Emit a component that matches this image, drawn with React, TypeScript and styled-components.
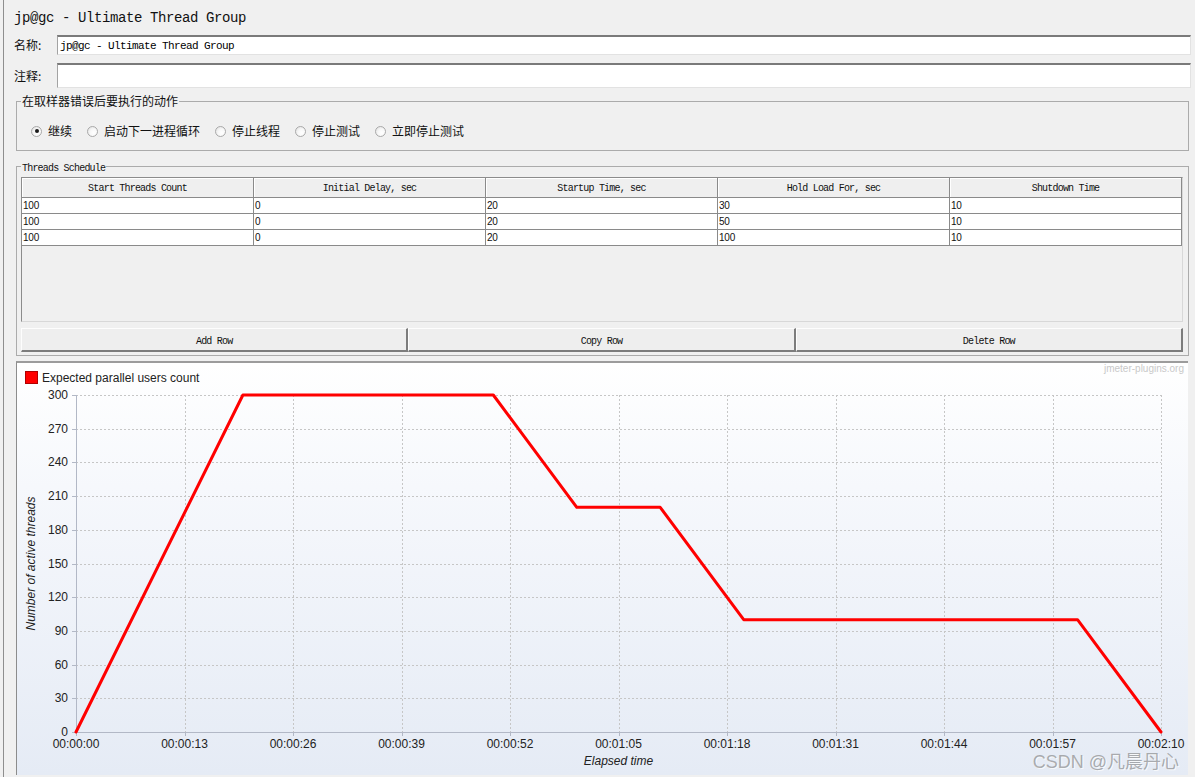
import React from "react";
import styled, { createGlobalStyle } from "styled-components";

const GlobalStyle = createGlobalStyle`
  html, body { margin: 0; padding: 0; background: #f0f0f0; }
  body {
    width: 1195px; height: 777px; overflow: hidden;
    font-family: "Liberation Sans", Arial, sans-serif;
  }
  #root { width: 1195px; height: 777px; }
`;

const MONO = `"Liberation Mono", "Noto Sans CJK SC", monospace`;
const CJK = `"Noto Sans CJK SC", "Liberation Sans", sans-serif`;
const SANS = `"Liberation Sans", Arial, sans-serif`;

const Frame = styled.div`
  box-sizing: border-box;
  margin-left: 3px;
  width: 1192px;
  height: 777px;
  border-left: 1px solid #8e8e8e;
  display: flex;
  flex-direction: column;
  overflow: hidden;
`;

const Title = styled.div`
  padding: 9px 0 0 10px;
  height: 18px;
  line-height: 19px;
  font-family: ${MONO};
  font-size: 14px;
  letter-spacing: -0.4px;
  color: #111;
  white-space: nowrap;
`;

const FieldRow = styled.div<{ $top: number; $h: number }>`
  display: flex;
  align-items: center;
  margin-top: ${(p) => p.$top}px;
  height: ${(p) => p.$h}px;
  padding-right: 4px;
`;

const FieldLabel = styled.span`
  flex: none;
  width: 43px;
  padding-left: 10px;
  font-family: ${CJK};
  font-size: 12px;
  line-height: 14px;
  color: #111;
`;

const TextField = styled.input`
  flex: 1;
  align-self: stretch;
  min-width: 0;
  box-sizing: border-box;
  margin: 0;
  background: #fff;
  border-style: solid;
  border-width: 2px 1px 1px 1px;
  border-color: #7a7a7a #e2e2e2 #e2e2e2 #a3a3a3;
  padding: 0 0 0 2px;
  outline: none;
  font-family: ${MONO};
  font-size: 11px;
  letter-spacing: -0.6px;
  color: #000;
`;

const GroupBox = styled.fieldset<{ $top: number; $pt: number; $pb: number }>`
  margin: ${(p) => p.$top}px 6px 0 12px;
  padding: ${(p) => p.$pt}px 5px ${(p) => p.$pb}px 4px;
  border: 1px solid #ababab;
  min-width: 0;
`;

const Legend = styled.legend<{ $mono?: boolean }>`
  padding: 0 1px;
  height: 14px;
  font-family: ${(p) => (p.$mono ? MONO : CJK)};
  font-size: ${(p) => (p.$mono ? "10px" : "12px")};
  letter-spacing: ${(p) => (p.$mono ? "-0.8px" : "0")};
  line-height: ${(p) => (p.$mono ? "19px" : "14px")};
  color: #111;
`;

const RadioRow = styled.div`
  display: flex;
  align-items: center;
  gap: 15px;
  height: 16px;
  padding-left: 10px;
`;

const RadioItem = styled.label`
  display: flex;
  align-items: center;
  gap: 6px;
  font-family: ${CJK};
  font-size: 12px;
  line-height: 14px;
  color: #111;
`;

const RadioDot = styled.span<{ $checked?: boolean }>`
  width: 11px;
  height: 11px;
  box-sizing: border-box;
  border-radius: 50%;
  border: 1px solid #a9a9a9;
  background: radial-gradient(circle at 65% 65%, #ffffff 0%, #f7f7f7 45%, #dcdcdc 100%);
  display: grid;
  place-items: center;
  &::after {
    content: "";
    width: 4px;
    height: 4px;
    border-radius: 50%;
    background: ${(p) => (p.$checked ? "#1a1a1a" : "transparent")};
  }
`;

const TablePane = styled.div`
  height: 145px;
  box-sizing: border-box;
  border: 1px solid #8c8c8c;
  border-bottom-color: #d8d8d8;
  border-right-color: #d8d8d8;
  background: #f0f0f0;
`;

const Grid = styled.div`
  display: grid;
  grid-template-columns: repeat(5, 1fr);
`;

const HeaderCell = styled.div`
  height: 20px;
  box-sizing: border-box;
  background: #efefef;
  border-right: 1px solid #8a8a8a;
  border-bottom: 1px solid #8a8a8a;
  box-shadow: inset 1px 1px 0 #ffffff;
  text-align: center;
  font-family: ${MONO};
  font-size: 10px;
  letter-spacing: -0.8px;
  line-height: 21px;
  color: #111;
  white-space: nowrap;
  overflow: hidden;
`;

const Cell = styled.div`
  height: 16px;
  box-sizing: border-box;
  background: #fff;
  border-right: 1px solid #8a8a8a;
  border-bottom: 1px solid #8a8a8a;
  padding-left: 1px;
  font-family: ${SANS};
  font-size: 10px;
  letter-spacing: -0.2px;
  line-height: 16px;
  color: #111;
`;

const ButtonRow = styled.div`
  display: grid;
  grid-template-columns: repeat(3, 1fr);
  margin-top: 6px;
  height: 24px;
`;

const Button = styled.button`
  box-sizing: border-box;
  height: 24px;
  margin: 0;
  padding: 3px 0 0;
  background: #eeeeee;
  border-style: solid;
  border-width: 1px 2px 2px 1px;
  border-color: #fdfdfd #7c7c7c #7c7c7c #fdfdfd;
  font-family: ${MONO};
  font-size: 10px;
  letter-spacing: -0.8px;
  color: #111;
`;

const ChartPanel = styled.div`
  position: relative;
  flex: none;
  height: 414px;
  box-sizing: border-box;
  margin: 5px 7px 0 12px;
  border-top: 2px solid #9c9c9c;
  border-left: 1px solid #8c8c8c;
  background: linear-gradient(#ffffff 0%, #f6f8fc 30%, #e5ebf5 100%);
  display: flex;
  flex-direction: column;
`;

const LegendRow = styled.div`
  display: flex;
  align-items: center;
  gap: 4px;
  height: 22px;
  box-sizing: border-box;
  padding: 7px 0 0 8px;
  font-family: ${SANS};
  font-size: 12px;
  color: #222;
`;

const Swatch = styled.span`
  width: 13px;
  height: 13px;
  box-sizing: border-box;
  background: #ff0000;
  border: 1px solid #b00000;
`;

const Brand = styled.div`
  position: absolute;
  top: 0;
  right: 4px;
  font-family: ${SANS};
  font-size: 10px;
  line-height: 12px;
  color: #c9c9c9;
`;

const Watermark = styled.div`
  position: absolute;
  right: 9px;
  bottom: 5px;
  font-family: "Liberation Sans", "Noto Sans CJK SC", sans-serif;
  font-size: 18px;
  line-height: 16px;
  color: rgba(110, 110, 110, 0.55);
  text-shadow: 1px 1px 0 rgba(255, 255, 255, 0.7);
  white-space: nowrap;
`;

const PlotSvg = styled.svg`
  display: block;
  flex: none;
`;

type Row = { count: number; delay: number; startup: number; hold: number; shutdown: number };

const schedule: Row[] = [
  { count: 100, delay: 0, startup: 20, hold: 30, shutdown: 10 },
  { count: 100, delay: 0, startup: 20, hold: 50, shutdown: 10 },
  { count: 100, delay: 0, startup: 20, hold: 100, shutdown: 10 },
];

const headers = [
  "Start Threads Count",
  "Initial Delay, sec",
  "Startup Time, sec",
  "Hold Load For, sec",
  "Shutdown Time",
];

const radios = ["继续", "启动下一进程循环", "停止线程", "停止测试", "立即停止测试"];

const W = 1171;
const H = 390;
const PX0 = 59;
const PX1 = 1144;
const PY0 = 10;
const PY1 = 347;
const T_MAX = 130;
const V_MAX = 300;
const sx = (t: number) => PX0 + (t / T_MAX) * (PX1 - PX0);
const sy = (v: number) => PY1 - (v / V_MAX) * (PY1 - PY0);

const rowValue = (r: Row, t: number) => {
  const a = r.delay;
  const b = a + r.startup;
  const c = b + r.hold;
  const d = c + r.shutdown;
  if (t <= a) return 0;
  if (t <= b) return (r.count * (t - a)) / r.startup;
  if (t <= c) return r.count;
  if (t <= d) return r.count * (1 - (t - c) / r.shutdown);
  return 0;
};

const breakpoints = Array.from(
  new Set(
    schedule.flatMap((r) => {
      const b = r.delay + r.startup;
      const c = b + r.hold;
      return [r.delay, b, c, c + r.shutdown];
    })
  )
).sort((x, y) => x - y);

const points = breakpoints
  .map((t) => {
    const v = schedule.reduce((s, r) => s + rowValue(r, t), 0);
    return `${sx(t).toFixed(1)},${sy(v).toFixed(1)}`;
  })
  .join(" ");

const fmt = (s: number) => {
  const h = Math.floor(s / 3600);
  const m = Math.floor((s % 3600) / 60);
  const sec = s % 60;
  return [h, m, sec].map((n) => String(n).padStart(2, "0")).join(":");
};

const xTicks = Array.from({ length: 11 }, (_, i) => i * 13);
const yTicks = Array.from({ length: 11 }, (_, i) => i * 30);

const GRID = "#c6c6c6";
const AXIS = "#b2b8c6";

function Chart() {
  return (
    <PlotSvg width={W} height={H} viewBox={`0 0 ${W} ${H}`}>
      <g shapeRendering="crispEdges">
        {yTicks.slice(1).map((v) => (
          <line
            key={`h${v}`}
            x1={PX0}
            x2={PX1}
            y1={Math.round(sy(v)) + 0.5}
            y2={Math.round(sy(v)) + 0.5}
            stroke={GRID}
            strokeDasharray="2 2"
          />
        ))}
        {xTicks.slice(1).map((t) => (
          <line
            key={`v${t}`}
            x1={Math.round(sx(t)) + 0.5}
            x2={Math.round(sx(t)) + 0.5}
            y1={PY0}
            y2={PY1}
            stroke={GRID}
            strokeDasharray="2 2"
          />
        ))}
        <line x1={PX0 + 0.5} x2={PX0 + 0.5} y1={PY0} y2={PY1 + 1} stroke={AXIS} />
        <line x1={PX0} x2={PX1 + 1} y1={PY1 + 0.5} y2={PY1 + 0.5} stroke={AXIS} />
        {yTicks.map((v) => (
          <line
            key={`yt${v}`}
            x1={PX0 - 4}
            x2={PX0}
            y1={Math.round(sy(v)) + 0.5}
            y2={Math.round(sy(v)) + 0.5}
            stroke={AXIS}
          />
        ))}
        {xTicks.map((t) => (
          <line
            key={`xt${t}`}
            x1={Math.round(sx(t)) + 0.5}
            x2={Math.round(sx(t)) + 0.5}
            y1={PY1}
            y2={PY1 + 4}
            stroke={AXIS}
          />
        ))}
      </g>
      <g fontFamily={SANS} fontSize={12} fill="#222">
        {yTicks.map((v) => (
          <text key={`yl${v}`} x={PX0 - 8} y={sy(v) + 4} textAnchor="end">
            {v}
          </text>
        ))}
        {xTicks.map((t) => (
          <text key={`xl${t}`} x={sx(t)} y={363} textAnchor="middle">
            {fmt(t)}
          </text>
        ))}
        <text x={(PX0 + PX1) / 2} y={380} textAnchor="middle" fontStyle="italic">
          Elapsed time
        </text>
        <text
          x={18}
          y={(PY0 + PY1) / 2}
          textAnchor="middle"
          fontStyle="italic"
          transform={`rotate(-90 18 ${(PY0 + PY1) / 2})`}
        >
          Number of active threads
        </text>
      </g>
      <polyline
        points={points}
        fill="none"
        stroke="#ff0000"
        strokeWidth={3}
        strokeLinejoin="round"
        strokeLinecap="round"
      />
    </PlotSvg>
  );
}

export default function App() {
  return (
    <>
      <GlobalStyle />
      <Frame>
        <Title>jp@gc - Ultimate Thread Group</Title>
        <FieldRow $top={8} $h={20}>
          <FieldLabel>名称:</FieldLabel>
          <TextField readOnly defaultValue="jp@gc - Ultimate Thread Group" />
        </FieldRow>
        <FieldRow $top={8} $h={25}>
          <FieldLabel>注释:</FieldLabel>
          <TextField readOnly defaultValue="" />
        </FieldRow>

        <GroupBox $top={6} $pt={15} $pb={11}>
          <Legend>在取样器错误后要执行的动作</Legend>
          <RadioRow>
            {radios.map((r, i) => (
              <RadioItem key={r}>
                <RadioDot $checked={i === 0} />
                {r}
              </RadioItem>
            ))}
          </RadioRow>
        </GroupBox>

        <GroupBox $top={8} $pt={4} $pb={3}>
          <Legend $mono>Threads Schedule</Legend>
          <TablePane>
            <Grid>
              {headers.map((h) => (
                <HeaderCell key={h}>{h}</HeaderCell>
              ))}
              {schedule.map((r, i) =>
                [r.count, r.delay, r.startup, r.hold, r.shutdown].map((v, j) => (
                  <Cell key={`${i}-${j}`}>{v}</Cell>
                ))
              )}
            </Grid>
          </TablePane>
          <ButtonRow>
            <Button>Add Row</Button>
            <Button>Copy Row</Button>
            <Button>Delete Row</Button>
          </ButtonRow>
        </GroupBox>

        <ChartPanel>
          <Brand>jmeter-plugins.org</Brand>
          <LegendRow>
            <Swatch />
            Expected parallel users count
          </LegendRow>
          <Chart />
          <Watermark>CSDN @凡晨丹心</Watermark>
        </ChartPanel>
      </Frame>
    </>
  );
}
